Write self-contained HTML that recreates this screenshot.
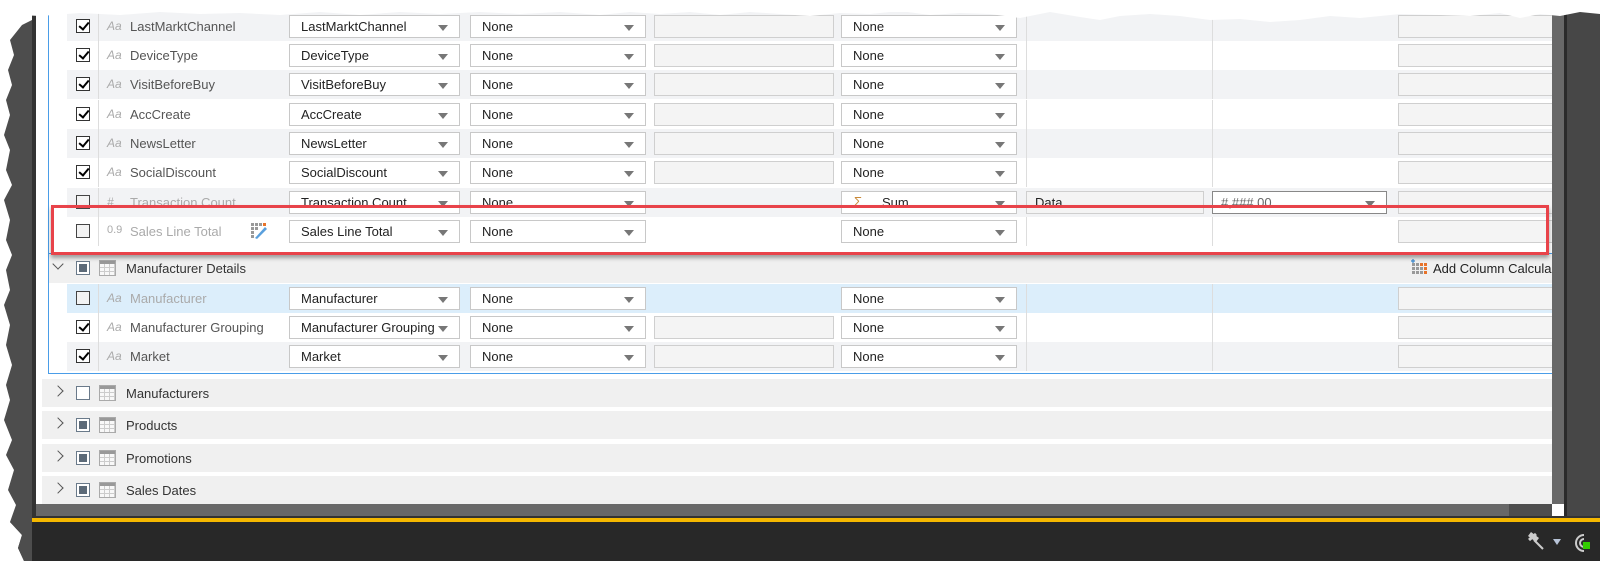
<!DOCTYPE html>
<html><head><meta charset="utf-8"><style>
*{box-sizing:border-box;margin:0;padding:0}
body{width:1600px;height:561px;position:relative;overflow:hidden;background:#fff;font-family:"Liberation Sans",sans-serif;font-size:13px;color:#222}
.a{position:absolute}
.row{position:absolute;left:67px;width:1485px;height:29px}
.g{background:#f2f3f5}.w{background:#fff}.bl{background:#dceefb}
.cb{position:absolute;left:9px;top:7px;width:14px;height:14px;border:1px solid #333;background:#fff}
.cb.on::after{content:"";position:absolute;left:4px;top:0px;width:4px;height:8px;border:solid #000;border-width:0 2px 2px 0;transform:rotate(40deg)}
.cb.off{background:#f3f3f3;border-color:#444}
.vd{position:absolute;top:0;bottom:0;width:1px;background:#ddd}
.aa{position:absolute;left:40px;top:7px;font-style:italic;color:#aaa;font-size:12px}
.nm{position:absolute;left:63px;top:7px;color:#555}
.nm.dim{color:#aaa}
.dd{position:absolute;top:3px;height:23px;background:#fff;border:1px solid #c8c8c8;padding:3px 0 0 11px;color:#222;white-space:nowrap;overflow:hidden}
.dd::after{content:"";position:absolute;right:11px;top:9px;border:5px solid transparent;border-top:6px solid #777;border-bottom:0}
.d1{left:222px;width:171px}.d2{left:403px;width:176px}.d3{left:774px;width:176px}
.tb{position:absolute;top:3px;height:23px;background:#f4f4f4;border:1px solid #cfcfcf}
.t1{left:587px;width:180px}.t2{left:1331px;width:160px}
.grp{position:absolute;left:42px;width:1510px;height:28px;background:#f0f0f0}
.chev{position:absolute;left:12px;top:8px;width:8px;height:8px;border:solid #555;border-width:1px 1px 0 0;transform:rotate(45deg)}
.gcb{position:absolute;left:34px;top:7px;width:14px;height:14px;border:1px solid #6a7a8a;background:#fff}
.gcb.f::after{content:"";position:absolute;left:2px;top:2px;width:8px;height:8px;background:#5c6a78}
.ti{position:absolute;left:57px;top:6px;width:17px;height:16px;border:1px solid #aaa;background:linear-gradient(#999 0 3px,transparent 3px),repeating-linear-gradient(90deg,transparent 0 4px,#ccc 4px 5px),repeating-linear-gradient(0deg,transparent 0 3px,#ccc 3px 4px);background-color:#f8f8f8}
.gt{position:absolute;left:84px;top:7px;color:#333}
</style></head><body>

<!-- panel background -->
<div class="a" style="left:36px;top:12px;width:1516px;height:492px;background:#fff"></div>
<div class="a" style="left:32px;top:12px;width:4px;height:504px;background:#333"></div>
<div class="a" style="left:48px;top:12px;width:1px;height:362px;background:#4a9de8"></div>

<!-- rows -->
<div class="row g" style="top:12px"><div class="cb on"></div><div class="vd" style="left:31px"></div><span class="aa">Aa</span><span class="nm">LastMarktChannel</span><div class="dd d1">LastMarktChannel</div><div class="dd d2">None</div><div class="tb t1"></div><div class="dd d3">None</div><div class="vd" style="left:959px"></div><div class="vd" style="left:1145px"></div><div class="tb t2"></div></div>
<div class="row w" style="top:41px"><div class="cb on"></div><div class="vd" style="left:31px"></div><span class="aa">Aa</span><span class="nm">DeviceType</span><div class="dd d1">DeviceType</div><div class="dd d2">None</div><div class="tb t1"></div><div class="dd d3">None</div><div class="vd" style="left:959px"></div><div class="vd" style="left:1145px"></div><div class="tb t2"></div></div>
<div class="row g" style="top:70px"><div class="cb on"></div><div class="vd" style="left:31px"></div><span class="aa">Aa</span><span class="nm">VisitBeforeBuy</span><div class="dd d1">VisitBeforeBuy</div><div class="dd d2">None</div><div class="tb t1"></div><div class="dd d3">None</div><div class="vd" style="left:959px"></div><div class="vd" style="left:1145px"></div><div class="tb t2"></div></div>
<div class="row w" style="top:100px"><div class="cb on"></div><div class="vd" style="left:31px"></div><span class="aa">Aa</span><span class="nm">AccCreate</span><div class="dd d1">AccCreate</div><div class="dd d2">None</div><div class="tb t1"></div><div class="dd d3">None</div><div class="vd" style="left:959px"></div><div class="vd" style="left:1145px"></div><div class="tb t2"></div></div>
<div class="row g" style="top:129px"><div class="cb on"></div><div class="vd" style="left:31px"></div><span class="aa">Aa</span><span class="nm">NewsLetter</span><div class="dd d1">NewsLetter</div><div class="dd d2">None</div><div class="tb t1"></div><div class="dd d3">None</div><div class="vd" style="left:959px"></div><div class="vd" style="left:1145px"></div><div class="tb t2"></div></div>
<div class="row w" style="top:158px"><div class="cb on"></div><div class="vd" style="left:31px"></div><span class="aa">Aa</span><span class="nm">SocialDiscount</span><div class="dd d1">SocialDiscount</div><div class="dd d2">None</div><div class="tb t1"></div><div class="dd d3">None</div><div class="vd" style="left:959px"></div><div class="vd" style="left:1145px"></div><div class="tb t2"></div></div>
<div class="row g" style="top:188px"><div class="cb off"></div><div class="vd" style="left:31px"></div><span class="aa">#</span><span class="nm dim">Transaction Count</span><div class="dd d1">Transaction Count</div><div class="dd d2">None</div><div class="dd d3" style="padding-left:40px">Sum<span class="a" style="left:12px;top:2px;color:#c98a3a">Σ</span></div><div class="tb" style="left:959px;width:178px;padding:3px 0 0 8px">Data</div><div class="dd" style="left:1145px;width:175px;border-color:#888;color:#666;padding-left:8px">#,###.00</div><div class="tb t2"></div></div>
<div class="row w" style="top:217px"><div class="cb off"></div><div class="vd" style="left:31px"></div><span class="aa" style="font-style:normal;font-size:11px">0.9</span><span class="nm dim">Sales Line Total</span>
<svg class="a" style="left:184px;top:6px" width="17" height="17" viewBox="0 0 17 17"><g fill="#999"><rect x="0" y="0" width="3" height="3"/><rect x="4" y="0" width="3" height="3"/><rect x="8" y="0" width="3" height="3"/><rect x="0" y="4" width="3" height="3"/><rect x="4" y="4" width="3" height="3"/><rect x="0" y="8" width="3" height="3"/><rect x="0" y="12" width="3" height="3"/></g><rect x="12" y="0" width="3" height="3" fill="#e8732a"/><path d="M4 15 L14 4 L16 6 L6 16 Z" fill="#5aa0dd"/></svg>
<div class="dd d1">Sales Line Total</div><div class="dd d2">None</div><div class="dd d3">None</div><div class="vd" style="left:959px"></div><div class="vd" style="left:1145px"></div><div class="tb t2"></div></div>
<div class="a" style="left:48px;top:253px;width:1504px;height:1px;background:#4a9de8"></div>

<!-- Manufacturer Details header -->
<div class="a" style="left:49px;top:254px;width:1503px;height:29px;background:#f0f0f0">
<div class="a" style="left:5px;top:6px;width:8px;height:8px;border:solid #555;border-width:0 1px 1px 0;transform:rotate(45deg)"></div>
<div class="gcb f" style="left:27px"></div><div class="ti" style="left:50px"></div><span class="gt" style="left:77px">Manufacturer Details</span>
<svg class="a" style="left:1362px;top:5px" width="17" height="18" viewBox="0 0 17 18"><g fill="#999"><rect x="1" y="4" width="3" height="3"/><rect x="5" y="4" width="3" height="3"/><rect x="1" y="8" width="3" height="3"/><rect x="5" y="8" width="3" height="3"/><rect x="9" y="8" width="3" height="3"/><rect x="1" y="12" width="3" height="3"/><rect x="5" y="12" width="3" height="3"/><rect x="9" y="12" width="3" height="3"/></g><g fill="#e8732a"><rect x="13" y="4" width="3" height="3"/><rect x="13" y="8" width="3" height="3"/><rect x="13" y="12" width="3" height="3"/><rect x="9" y="4" width="3" height="3"/></g><path d="M2 0v4M0 2h4" stroke="#3a8ad0" stroke-width="1.2"/></svg>
<span class="a" style="left:1384px;top:7px;color:#222;white-space:nowrap">Add Column Calcula</span></div>

<div class="row bl" style="top:284px"><div class="cb off"></div><div class="vd" style="left:31px"></div><span class="aa">Aa</span><span class="nm dim">Manufacturer</span><div class="dd d1">Manufacturer</div><div class="dd d2">None</div><div class="dd d3">None</div><div class="vd" style="left:959px"></div><div class="vd" style="left:1145px"></div><div class="tb t2"></div></div>
<div class="row w" style="top:313px"><div class="cb on"></div><div class="vd" style="left:31px"></div><span class="aa">Aa</span><span class="nm">Manufacturer Grouping</span><div class="dd d1" style="padding-right:30px">Manufacturer Grouping</div><div class="dd d2">None</div><div class="tb t1"></div><div class="dd d3">None</div><div class="vd" style="left:959px"></div><div class="vd" style="left:1145px"></div><div class="tb t2"></div></div>
<div class="row g" style="top:342px"><div class="cb on"></div><div class="vd" style="left:31px"></div><span class="aa">Aa</span><span class="nm">Market</span><div class="dd d1">Market</div><div class="dd d2">None</div><div class="tb t1"></div><div class="dd d3">None</div><div class="vd" style="left:959px"></div><div class="vd" style="left:1145px"></div><div class="tb t2"></div></div>
<div class="a" style="left:48px;top:373px;width:1504px;height:1px;background:#4a9de8"></div>

<!-- collapsed groups -->
<div class="grp" style="top:379px"><div class="chev"></div><div class="gcb"></div><div class="ti"></div><span class="gt">Manufacturers</span></div>
<div class="grp" style="top:411px"><div class="chev"></div><div class="gcb f"></div><div class="ti"></div><span class="gt">Products</span></div>
<div class="grp" style="top:444px"><div class="chev"></div><div class="gcb f"></div><div class="ti"></div><span class="gt">Promotions</span></div>
<div class="grp" style="top:476px"><div class="chev"></div><div class="gcb f"></div><div class="ti"></div><span class="gt">Sales Dates</span></div>

<!-- red highlight -->
<div class="a" style="left:51px;top:205px;width:1498px;height:50px;border:3px solid #e8434a;box-shadow:0 3px 4px rgba(0,0,0,.35)"></div>

<!-- scrollbars -->
<div class="a" style="left:1552px;top:12px;width:12px;height:492px;background:#686868"></div>
<div class="a" style="left:1564px;top:12px;width:3px;height:504px;background:#2a2a2a"></div>
<div class="a" style="left:1567px;top:12px;width:33px;height:506px;background:#474747"></div>
<div class="a" style="left:36px;top:504px;width:1473px;height:12px;background:#686868"></div>
<div class="a" style="left:1509px;top:504px;width:43px;height:12px;background:#4e4e4e"></div>
<div class="a" style="left:1552px;top:504px;width:12px;height:12px;background:#fff"></div>
<div class="a" style="left:14px;top:516px;width:1586px;height:2px;background:#333"></div>
<div class="a" style="left:14px;top:518px;width:1586px;height:4px;background:#f5b800"></div>
<div class="a" style="left:10px;top:522px;width:1590px;height:39px;background:#282828"></div>

<!-- status icons -->
<svg class="a" style="left:1525px;top:530px" width="24" height="22" viewBox="0 0 24 22"><path d="M6 2 L14 8 L11 12 L3 6 Z" fill="#ccc"/><path d="M9 10 L18 19" stroke="#ccc" stroke-width="2"/><path d="M4 10 L11 4" stroke="#ccc" stroke-width="3"/></svg>
<div class="a" style="left:1553px;top:539px;border:4px solid transparent;border-top:6px solid #b8c4d8;border-bottom:0"></div>
<svg class="a" style="left:1572px;top:533px" width="22" height="20" viewBox="0 0 22 20"><path d="M12 2 A8 8 0 1 0 12 18" fill="none" stroke="#ccc" stroke-width="2"/><path d="M12 6 A4 4 0 1 0 12 14" fill="none" stroke="#ccc" stroke-width="2"/><rect x="11" y="9" width="7" height="7" fill="#33cc00"/></svg>

<!-- torn edges -->
<svg class="a" style="left:0;top:0" width="1600" height="561" viewBox="0 0 1600 561">
<path d="M0 0 H1600 V14 L1580 12 1560 16 1540 14 1520 18 1500 13 1470 16 1440 15 1400 14 1360 18 1330 16 1300 20 1270 22 1240 19 1210 20 1180 16 1150 14 1120 16 1100 20 1080 17 1050 12 1020 18 990 14 960 13 930 15 900 11 870 14 840 13 810 16 780 14 750 12 720 15 690 12 660 14 630 12 600 15 560 12 520 14 480 12 440 14 400 12 360 15 320 12 280 15 240 13 200 14 160 12 120 15 80 13 40 16 0 14 Z" fill="#fff"/>
<path d="M0 0 V561 H24 L18 548 22 535 10 522 16 505 8 490 14 470 6 455 12 440 4 420 10 400 6 385 12 365 6 345 10 325 4 305 10 290 6 270 12 255 6 240 10 220 4 200 12 185 6 170 10 150 4 135 10 115 6 100 12 85 8 70 14 55 10 40 18 30 14 18 22 8 Z" fill="#fff"/>
<path d="M24 561 L18 548 22 535 10 522 16 505 8 490 14 470 6 455 12 440 4 420 10 400 6 385 12 365 6 345 10 325 4 305 10 290 6 270 12 255 6 240 10 220 4 200 12 185 6 170 10 150 4 135 10 115 6 100 12 85 8 70 14 55 10 40 18 30 22 25 32 20 32 561 Z" fill="#4d4d4d"/>
</svg>
</body></html>
